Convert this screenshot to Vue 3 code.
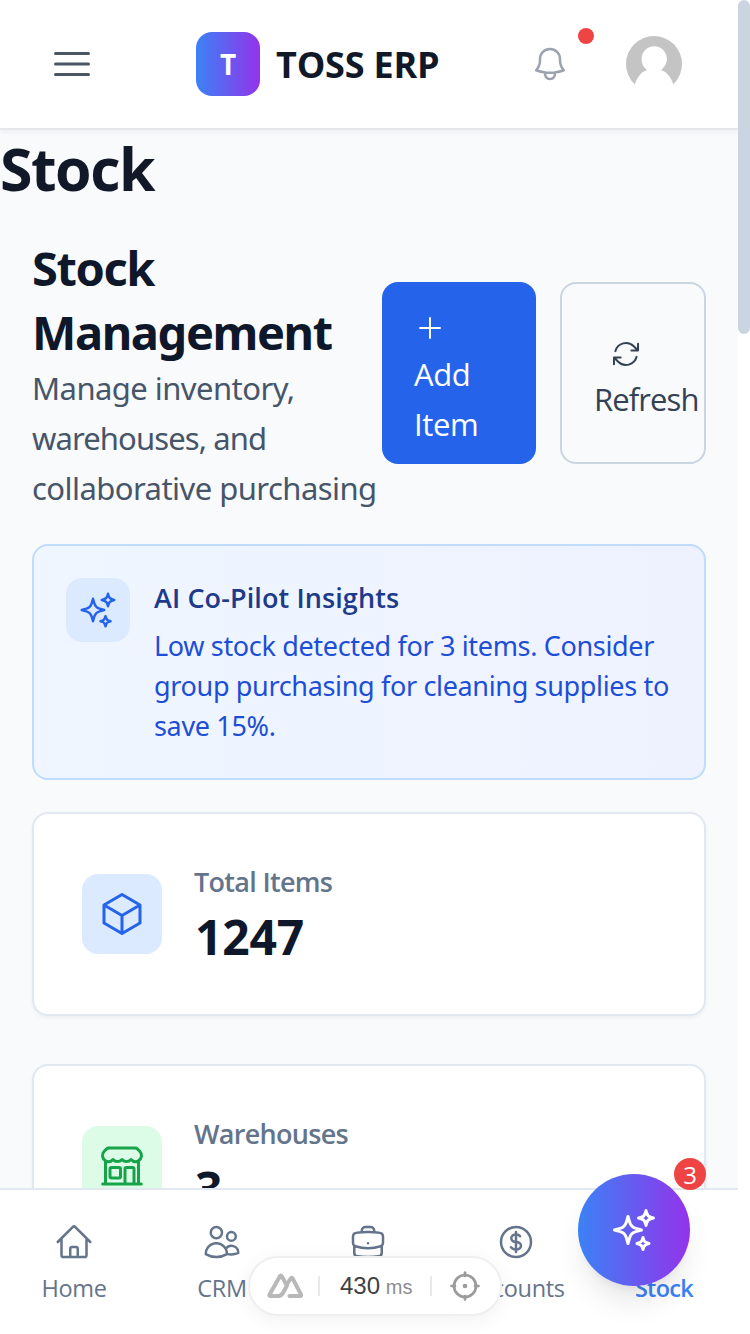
<script setup>
const icons = {
  menu: 'M3.75 6.75h16.5M3.75 12h16.5m-16.5 5.25h16.5',
  bell: 'M14.857 17.082a23.848 23.848 0 0 0 5.454-1.31A8.967 8.967 0 0 1 18 9.75V9A6 6 0 0 0 6 9v.75a8.967 8.967 0 0 1-2.312 6.022c1.733.64 3.56 1.085 5.455 1.31m5.714 0a24.255 24.255 0 0 1-5.714 0m5.714 0a3 3 0 1 1-5.714 0',
  plus: 'M12 4.5v15m7.5-7.5h-15',
  refresh: 'M16.023 9.348h4.992v-.001M2.985 19.644v-4.992m0 0h4.992m-4.993 0 3.181 3.183a8.25 8.25 0 0 0 13.803-3.7M4.031 9.865a8.25 8.25 0 0 1 13.803-3.7l3.181 3.182m0-4.991v4.99',
  sparkles: 'M9.813 15.904 9 18.75l-.813-2.846a4.5 4.5 0 0 0-3.09-3.09L2.25 12l2.846-.813a4.5 4.5 0 0 0 3.09-3.09L9 5.25l.813 2.846a4.5 4.5 0 0 0 3.09 3.09L15.75 12l-2.846.813a4.5 4.5 0 0 0-3.09 3.09ZM18.259 8.715 18 9.75l-.259-1.035a3.375 3.375 0 0 0-2.455-2.456L14.25 6l1.036-.259a3.375 3.375 0 0 0 2.455-2.456L18 2.25l.259 1.035a3.375 3.375 0 0 0 2.456 2.456L21.75 6l-1.035.259a3.375 3.375 0 0 0-2.456 2.456ZM16.894 20.567 16.5 21.75l-.394-1.183a2.25 2.25 0 0 0-1.423-1.423L13.5 18.75l1.183-.394a2.25 2.25 0 0 0 1.423-1.423l.394-1.183.394 1.183a2.25 2.25 0 0 0 1.423 1.423l1.183.394-1.183.394a2.25 2.25 0 0 0-1.423 1.423Z',
  cube: 'm21 7.5-9-5.25L3 7.5m18 0-9 5.25m9-5.25v9l-9 5.25M3 7.5l9 5.25M3 7.5v9l9 5.25m0-9v9',
  store: 'M13.5 21v-7.5a.75.75 0 0 1 .75-.75h3a.75.75 0 0 1 .75.75V21m-4.5 0H2.36m11.14 0H18m0 0h3.64m-1.39 0V9.349M3.75 21V9.349m0 0a3.001 3.001 0 0 0 3.75-.615A2.993 2.993 0 0 0 9.75 9.75c.896 0 1.7-.393 2.25-1.016a2.993 2.993 0 0 0 2.25 1.016c.896 0 1.7-.393 2.25-1.015a3.001 3.001 0 0 0 3.75.614m-16.5 0a3.004 3.004 0 0 1-.621-4.72l1.189-1.19A1.5 1.5 0 0 1 5.378 3h13.243a1.5 1.5 0 0 1 1.06.44l1.19 1.189a3 3 0 0 1-.621 4.72M6.75 18h3.75a.75.75 0 0 0 .75-.75V13.5a.75.75 0 0 0-.75-.75H6.75a.75.75 0 0 0-.75.75v3.75c0 .414.336.75.75.75Z',
  home: 'm2.25 12 8.954-8.955c.44-.439 1.152-.439 1.591 0L21.75 12M4.5 9.75v10.125c0 .621.504 1.125 1.125 1.125H9.75v-4.875c0-.621.504-1.125 1.125-1.125h2.25c.621 0 1.125.504 1.125 1.125V21h4.125c.621 0 1.125-.504 1.125-1.125V9.75M8.25 21h8.25',
  users: 'M15 19.128a9.38 9.38 0 0 0 2.625.372 9.337 9.337 0 0 0 4.121-.952 4.125 4.125 0 0 0-7.533-2.493M15 19.128v-.003c0-1.113-.285-2.16-.786-3.07M15 19.128v.106A12.318 12.318 0 0 1 8.624 21c-2.331 0-4.512-.645-6.374-1.766l-.001-.109a6.375 6.375 0 0 1 11.964-3.07M12 6.375a3.375 3.375 0 1 1-6.75 0 3.375 3.375 0 0 1 6.75 0Zm8.25 2.25a2.625 2.625 0 1 1-5.25 0 2.625 2.625 0 0 1 5.25 0Z',
  briefcase: 'M20.25 14.15v4.25c0 1.094-.787 2.036-1.872 2.18-2.087.277-4.216.42-6.378.42s-4.291-.143-6.378-.42c-1.085-.144-1.872-1.086-1.872-2.18v-4.25m16.5 0a2.18 2.18 0 0 0 .75-1.661V8.706c0-1.081-.768-2.015-1.837-2.175a48.114 48.114 0 0 0-3.413-.387m4.5 8.006c-.194.165-.42.295-.673.38A23.978 23.978 0 0 1 12 15.75c-2.648 0-5.195-.429-7.577-1.22a2.016 2.016 0 0 1-.673-.38m0 0A2.18 2.18 0 0 1 3 12.489V8.706c0-1.081.768-2.015 1.837-2.175a48.111 48.111 0 0 1 3.413-.387m7.5 0V5.25A2.25 2.25 0 0 0 13.5 3h-3a2.25 2.25 0 0 0-2.25 2.25v.894m7.5 0a48.667 48.667 0 0 0-7.5 0M12 12.75h.008v.008H12v-.008Z',
  dollar: 'M12 6v12m-3-2.818.879.659c1.171.879 3.07.879 4.242 0 1.172-.879 1.172-2.303 0-3.182C13.536 12.219 12.768 12 12 12c-.725 0-1.45-.22-2.003-.659-1.106-.879-1.106-2.303 0-3.182s2.9-.879 4.006 0l.415.33M21 12a9 9 0 1 1-18 0 9 9 0 0 1 18 0Z',
}

const stats = [
  { label: 'Total Items', value: '1247', icon: icons.cube, tone: 'blue' },
  { label: 'Warehouses', value: '3', icon: icons.store, tone: 'green' },
]

const tabs = [
  { label: 'Home', icon: icons.home },
  { label: 'CRM', icon: icons.users },
  { label: '', icon: icons.briefcase },
  { label: 'Accounts', icon: icons.dollar },
  { label: 'Stock', icon: icons.cube, active: true },
]
</script>

<template>
  <div class="screen">
    <div class="page">
      <header class="topbar">
        <button class="menu"><svg class="icon s48" viewBox="0 0 24 24"><path :d="icons.menu" /></svg></button>
        <div class="brand">
          <div class="logo">T</div>
          <span class="brand-name">TOSS ERP</span>
        </div>
        <div class="tools">
          <div class="bell">
            <svg class="icon s40" viewBox="0 0 24 24"><path :d="icons.bell" /></svg>
            <span class="dot"></span>
          </div>
          <svg class="avatar" viewBox="0 0 56 56">
            <circle cx="28" cy="28" r="28" fill="#c4c4c4" />
            <path d="M9 48C11.500 41 15 36 21 34C17.500 31.500 15.500 27.500 15.500 23A12.700 12.700 0 0 1 40.900 23C40.900 27.500 38.500 31.500 35 34C41 36 45 41 47.200 48V56H9Z" fill="#fff" />
          </svg>
        </div>
      </header>

      <h1 class="title">Stock</h1>

      <main class="content">
        <section class="intro">
          <div class="intro-text">
            <h2>Stock<br />Management</h2>
            <p>Manage inventory,<br /><span class="tight">warehouses, and</span><br />collaborative purchasing</p>
          </div>
          <div class="actions">
            <button class="btn primary">
              <svg class="icon s32" viewBox="0 0 24 24"><path :d="icons.plus" /></svg>
              <span>Add</span>
              <span>Item</span>
            </button>
            <button class="btn outline">
              <svg class="icon s32" viewBox="0 0 24 24"><path :d="icons.refresh" /></svg>
              <span>Refresh</span>
            </button>
          </div>
        </section>

        <section class="insight">
          <div class="insight-icon"><svg class="icon s40" viewBox="0 0 24 24"><path :d="icons.sparkles" /></svg></div>
          <div class="insight-body">
            <h3>AI Co-Pilot Insights</h3>
            <p>Low stock detected for 3 items. Consider<br />group purchasing for cleaning supplies to<br />save 15%.</p>
          </div>
        </section>

        <section class="stats">
          <article v-for="s in stats" :key="s.label" class="stat">
            <div class="stat-icon" :class="s.tone"><svg class="icon s48" viewBox="0 0 24 24"><path :d="s.icon" /></svg></div>
            <div>
              <div class="stat-label">{{ s.label }}</div>
              <div class="stat-value">{{ s.value }}</div>
            </div>
          </article>
        </section>
      </main>
    </div>

    <div class="scrollbar"><div class="thumb"></div></div>

    <nav class="tabbar">
      <a v-for="(t, i) in tabs" :key="i" class="tab" :class="{ active: t.active }">
        <svg class="icon s40" viewBox="0 0 24 24"><path :d="t.icon" /></svg>
        <span>{{ t.label }}</span>
      </a>
    </nav>

    <button class="fab">
      <svg class="icon s48" viewBox="0 0 24 24"><path :d="icons.sparkles" /></svg>
      <span class="badge">3</span>
    </button>

    <div class="devtools">
      <svg class="peaks" viewBox="0 0 36 26" fill="none" stroke="#b8b8b8" stroke-width="4" stroke-linejoin="round" stroke-linecap="round">
        <path d="M11.500 23H3.200Q1.800 23 2.600 21.500L12.800 3.400Q13.800 1.800 14.800 3.400L20 12.500L16.500 19Q14.500 23 11.500 23" />
        <path d="M19.500 12L23.700 5.500Q24.700 4 25.600 5.500L34 21.400Q34.700 23 33 23H22.500" />
      </svg>
      <i class="rule"></i>
      <span class="time">430 <small>ms</small></span>
      <i class="rule"></i>
      <svg class="target" viewBox="0 0 30 30" fill="none" stroke="#9b9b9b" stroke-width="2.700" stroke-linecap="round">
        <circle cx="15" cy="15" r="11" />
        <path d="M15 1.500V5M15 25v3.500M1.500 15H5M25 15h3.500" />
        <circle cx="15" cy="15" r="2.300" fill="#9b9b9b" stroke="none" />
      </svg>
    </div>
  </div>
</template>

<style>
body { overflow: hidden; background: #fff; }
</style>

<style scoped>
* { box-sizing: border-box; }
.screen {
  position: relative;
  display: flex;
  width: 750px;
  height: 1334px;
  overflow: hidden;
  background: #fff;
  font-family: "Open Sans", "Noto Sans", sans-serif;
  color: #0f172a;
  white-space: nowrap;
}
h1, h2, h3, p { margin: 0; }
button { border: 0; background: none; padding: 0; font: inherit; color: inherit; text-align: left; }
.icon { display: block; fill: none; stroke: currentColor; stroke-width: 1.5; stroke-linecap: round; stroke-linejoin: round; flex: none; }
.s32 { width: 32px; height: 32px; }
.s40 { width: 40px; height: 40px; }
.s48 { width: 48px; height: 48px; }

.page { width: 738px; background: #f8fafc; }
.topbar {
  display: flex;
  align-items: center;
  justify-content: space-between;
  height: 130px;
  padding: 0 56px 0 48px;
  background: #fff;
  border-bottom: 2px solid #e5e7eb;
  box-shadow: 0 2px 4px rgba(0, 0, 0, 0.05);
}
.menu { color: #4b5563; }
.brand { display: flex; align-items: center; gap: 16px; width: 242px; margin-left: 8px; }
.logo {
  display: flex;
  flex: none;
  align-items: center;
  justify-content: center;
  width: 64px;
  height: 64px;
  border-radius: 16px;
  background: linear-gradient(to right, #3b82f6, #9333ea);
  color: #fff;
  font-size: 28px;
  font-weight: 700;
}
.brand-name { font-size: 36px; font-weight: 700; color: #111827; letter-spacing: -0.2px; }
.tools { display: flex; align-items: center; gap: 56px; }
.bell { position: relative; color: #9ca3af; }
.dot { position: absolute; left: 48px; top: -16px; width: 16px; height: 16px; border-radius: 50%; background: #ef4444; }
.avatar { width: 56px; height: 56px; display: block; }

.title { height: 72px; padding-top: 2px; font-size: 59px; line-height: 72px; font-weight: 700; color: #111827; letter-spacing: -1.5px; }

.content { padding: 32px; }
.intro { display: flex; align-items: center; justify-content: space-between; height: 278px; }
.intro-text { width: 350px; font-family: "Noto Sans", "Open Sans", sans-serif; }
h2 { font-size: 47px; line-height: 64px; font-weight: 700; letter-spacing: -1.4px; padding-top: 2px; height: 128px; }
.intro p { font-size: 31px; line-height: 50px; color: #475569; padding-top: 1px; height: 150px; letter-spacing: -0.55px; }
.intro .tight { letter-spacing: -0.9px; }
.actions { display: flex; gap: 24px; }
.btn { display: flex; flex-direction: column; justify-content: center; height: 182px; border-radius: 16px; font-size: 31px; line-height: 50px; letter-spacing: -0.4px; padding-left: 32px; }
.btn .icon { margin-top: 15px; margin-bottom: 4px; }
.primary { width: 154px; background: #2563eb; color: #fff; padding-top: 1px; }
.primary .icon { margin-top: 14px; margin-bottom: 5px; }
.outline { width: 146px; border: 2px solid #cbd5e1; color: #334155; letter-spacing: -0.9px; padding-top: 1px; }
.outline .icon { margin-left: 16px; }

.insight {
  display: flex;
  gap: 24px;
  height: 236px;
  margin-top: 32px;
  padding: 32px;
  border: 2px solid #bfdbfe;
  border-radius: 16px;
  background: linear-gradient(to right, #eff6ff, #eef2ff);
}
.insight-icon { display: flex; align-items: center; justify-content: center; width: 64px; height: 64px; border-radius: 16px; background: #dbeafe; color: #2563eb; }
h3 { height: 48px; font-size: 27px; line-height: 40px; font-weight: 600; color: #1e3a8a; letter-spacing: 0.1px; }
.insight p { font-family: "Noto Sans", "Open Sans", sans-serif; font-size: 27px; line-height: 40px; color: #1d4ed8; letter-spacing: -0.34px; }

.stats { display: flex; flex-direction: column; gap: 48px; margin-top: 32px; }
.stat {
  display: flex;
  align-items: center;
  gap: 32px;
  height: 204px;
  padding: 48px;
  border: 2px solid #e2e8f0;
  border-radius: 16px;
  background: #fff;
  box-shadow: 0 2px 4px rgba(0, 0, 0, 0.05);
}
.stat-icon { display: flex; align-items: center; justify-content: center; width: 80px; height: 80px; border-radius: 16px; }
.blue { background: #dbeafe; color: #2563eb; }
.green { background: #dcfce7; color: #16a34a; }
.stat-label { font-size: 27px; line-height: 40px; height: 40px; font-weight: 600; color: #64748b; letter-spacing: -0.7px; }
.stat-value { font-size: 48px; line-height: 69px; height: 64px; font-weight: 700; padding-left: 1px; letter-spacing: -0.2px; }

.scrollbar { width: 12px; background: #fff; }
.thumb { height: 334px; border-radius: 6px; background: #cbd5e1; }

.tabbar {
  position: absolute;
  left: 0;
  bottom: 0;
  display: grid;
  grid-template-columns: 148px 148px 144px 152px 146px;
  width: 738px;
  height: 146px;
  border-top: 2px solid #e2e8f0;
  background: #fff;
}
.tab { display: flex; flex-direction: column; align-items: center; gap: 9px; padding-top: 32px; color: #64748b; font-size: 23.5px; line-height: 34px; letter-spacing: -0.3px; }
.tab.active { color: #3b82f6; font-weight: 600; letter-spacing: -0.7px; padding-right: 2px; }

.fab {
  position: absolute;
  left: 578px;
  top: 1174px;
  display: flex;
  align-items: center;
  justify-content: center;
  width: 112px;
  height: 112px;
  border-radius: 50%;
  background: linear-gradient(to right, #3b82f6, #9333ea);
  color: #fff;
  box-shadow: 0 20px 30px -6px rgba(0, 0, 0, 0.1), 0 8px 12px -8px rgba(0, 0, 0, 0.1);
}
.badge { position: absolute; right: -16px; top: -16px; width: 32px; height: 32px; border-radius: 50%; background: #ef4444; font-size: 24px; line-height: 34px; text-align: center; }

.devtools {
  position: absolute;
  left: 248px;
  top: 1256px;
  display: flex;
  align-items: center;
  width: 254px;
  height: 60px;
  padding: 0 20px 0 17px;
  border: 2px solid #efefef;
  border-radius: 30px;
  background: #fff;
  box-shadow: 0 4px 20px rgba(0, 0, 0, 0.06);
  font-family: "Liberation Sans", Arial, sans-serif;
}
.peaks { width: 36px; height: 26px; }
.rule { width: 2px; height: 20px; background: #e8e8e8; margin-left: 15px; }
.time { width: 91px; margin-left: 20px; margin-right: -1px; font-size: 24px; color: #404040; }
.time small { font-size: 20px; color: #8c8c8c; margin-left: -1px; }
.time + .rule { margin-left: 0; }
.target { width: 30px; height: 30px; margin-left: auto; }
</style>
